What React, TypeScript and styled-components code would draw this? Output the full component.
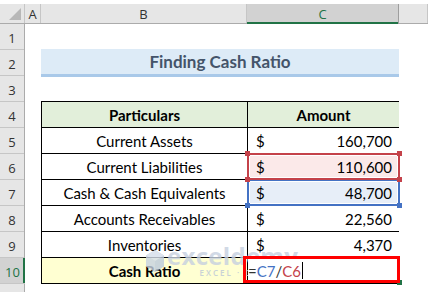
import styled, { createGlobalStyle, css } from 'styled-components'

const GlobalStyle = createGlobalStyle`
  html, body {
    margin: 0;
    padding: 0;
    background: #fff;
  }
  body {
    font-family: Lato, "Open Sans", "Liberation Sans", sans-serif;
    color: #000;
  }
`

type Tone = 'red' | 'blue'

interface IRow {
  label: string;
  amount: string;
  tone?: Tone;
}

const rows: IRow[] = [
  { label: 'Current Assets', amount: '160,700' },
  { label: 'Current Liabilities', amount: '110,600', tone: 'red' },
  { label: 'Cash & Cash Equivalents', amount: '48,700', tone: 'blue' },
  { label: 'Accounts Receivables', amount: '22,560' },
  { label: 'Inventories', amount: '4,370' },
]

// row 11 is only a sliver at the bottom, its number is out of view
const rowNumbers = [1, 2, 3, 4, 5, 6, 7, 8, 9, 10]

const toneColors = {
  red: { line: '#C4424A', fill: '#FBE9E9' },
  blue: { line: '#4472C4', fill: '#E7EEF8' },
}

const App = () => {
  return (
    <>
      <GlobalStyle />
      <Sheet>
        <HeaderRow>
          <Corner />
          <ColHead $w={16}>A</ColHead>
          <ColHead $w={206}>B</ColHead>
          <ColHead $w={152} $active>C</ColHead>
          <ColHead $grow />
        </HeaderRow>
        <Body>
          <RowHeads>
            {rowNumbers.map(n => (
              <RowHead key={n} $active={n === 10}>{n}</RowHead>
            ))}
            <RowHead />
          </RowHeads>
          <Grid>
            <Title>Finding Cash Ratio</Title>
            <Table>
              <HeadCell>Particulars</HeadCell>
              <HeadCell>Amount</HeadCell>
              {rows.map(r => (
                <Row key={r.label} label={r.label} amount={r.amount} tone={r.tone} />
              ))}
              <LabelCell $result>Cash Ratio</LabelCell>
              <EditCell>
                <span>=</span>
                <Ref $tone="blue">C7</Ref>
                <span>/</span>
                <Ref $tone="red">C6</Ref>
                <Caret />
                <FillHandle />
              </EditCell>
            </Table>
            <Watermark>
              <svg width="20" height="24" viewBox="0 0 20 24">
                <path d="M10 1 L19 6.5 L19 17.5 L10 23 L1 17.5 L1 6.5 Z" fill="#bccadc" />
                <path d="M10 1 L19 6.5 L10 12 L1 6.5 Z" fill="#d6deea" />
                <path d="M10 12 L10 23 L1 17.5 L1 6.5 Z" fill="#c8d3e2" />
              </svg>
              <MarkText>
                <MarkName>exceldemy</MarkName>
                <MarkTag>EXCEL · DATA · BI</MarkTag>
              </MarkText>
            </Watermark>
          </Grid>
        </Body>
      </Sheet>
    </>
  )
}

const Row = ({ label, amount, tone }: IRow) => (
  <>
    <LabelCell>{label}</LabelCell>
    <AmountCell $tone={tone}>
      <span>$</span>
      <span>{amount}</span>
      {tone && (
        <>
          <Handle $tone={tone} $x="left" $y="top" />
          <Handle $tone={tone} $x="right" $y="top" />
          <Handle $tone={tone} $x="left" $y="bottom" />
          <Handle $tone={tone} $x="right" $y="bottom" />
        </>
      )}
    </AmountCell>
  </>
)

const Sheet = styled.div`
  width: 428px;
  height: 292px;
  overflow: hidden;
  padding-top: 4px;
  box-sizing: border-box;
`

const HeaderRow = styled.div`
  display: flex;
  height: 19px;
  background: #e6e6e6;
  border-bottom: 1px solid #ababab;
`

const Corner = styled.div`
  width: 24px;
  border-right: 1px solid #c6c6c6;
  position: relative;
  &::after {
    content: '';
    position: absolute;
    right: 3px;
    bottom: 3px;
    border-left: 12px solid transparent;
    border-bottom: 12px solid #b7b7b7;
  }
`

const ColHead = styled.div<{ $w?: number; $grow?: boolean; $active?: boolean }>`
  width: ${p => (p.$w ? `${p.$w - 1}px` : 'auto')};
  flex: ${p => (p.$grow ? 1 : 'none')};
  border-right: 1px solid #c6c6c6;
  display: flex;
  align-items: center;
  justify-content: center;
  font-family: "Open Sans", "Liberation Sans", sans-serif;
  font-size: 13px;
  color: #333;
  ${p =>
    p.$active &&
    css`
      background: #d2d2d2;
      color: #217346;
      box-shadow: inset 0 -2px 0 #217346;
      margin-bottom: -1px;
      border-right-color: #9e9e9e;
    `}
`

const Body = styled.div`
  display: flex;
`

const RowHeads = styled.div`
  width: 24px;
  background: #e6e6e6;
  border-right: 1px solid #ababab;
  display: flex;
  flex-direction: column;
`

const RowHead = styled.div<{ $active?: boolean }>`
  height: 23px;
  padding-bottom: 2px;
  border-bottom: 1px solid #c6c6c6;
  display: flex;
  align-items: flex-end;
  justify-content: center;
  font-family: "Open Sans", "Liberation Sans", sans-serif;
  font-size: 13px;
  color: #333;
  ${p =>
    p.$active &&
    css`
      background: #d2d2d2;
      color: #217346;
      box-shadow: inset -2px 0 0 #217346;
      margin-right: -1px;
    `}
`

const Grid = styled.div`
  position: relative;
  flex: 1;
  display: grid;
  grid-template-columns: 16px 206px 152px 1fr;
  grid-template-rows: repeat(11, 26px);
`

const Title = styled.div`
  grid-column: 2 / 4;
  grid-row: 2;
  align-self: start;
  margin-top: -1px;
  height: 25px;
  background: #ddebf7;
  border-bottom: 3px solid #a9c9e9;
  display: flex;
  align-items: center;
  justify-content: center;
  font-size: 17px;
  font-weight: 700;
  color: #44546a;
`

const Table = styled.div`
  grid-column: 2 / 4;
  grid-row: 4 / 11;
  align-self: start;
  margin-top: -1px;
  display: grid;
  grid-template-columns: 205px 151px;
  grid-auto-rows: 25px;
  gap: 1px;
  padding: 1px;
  background: #000;
`

const cellBase = css`
  display: flex;
  align-items: center;
  font-size: 15px;
  background: #fff;
  position: relative;
`

const HeadCell = styled.div`
  ${cellBase};
  justify-content: center;
  background: #e2efda;
  font-weight: 700;
`

const LabelCell = styled.div<{ $result?: boolean }>`
  ${cellBase};
  justify-content: center;
  ${p =>
    p.$result &&
    css`
      background: #ffffd2;
      font-weight: 700;
    `}
`

const AmountCell = styled.div<{ $tone?: Tone }>`
  ${cellBase};
  justify-content: space-between;
  padding: 0 7px 0 8px;
  ${p =>
    p.$tone &&
    css`
      background: ${toneColors[p.$tone].fill};
      z-index: ${p.$tone === 'red' ? 2 : 1};
      &::after {
        content: '';
        position: absolute;
        inset: -1px;
        border: 2px solid ${toneColors[p.$tone].line};
        box-shadow: inset 0 0 0 1px #fff;
      }
    `}
`

const Handle = styled.span<{ $tone: Tone; $x: 'left' | 'right'; $y: 'top' | 'bottom' }>`
  position: absolute;
  width: 5px;
  height: 5px;
  background: ${p => toneColors[p.$tone].line};
  ${p => p.$x}: -3px;
  ${p => p.$y}: -3px;
  z-index: 3;
`

const EditCell = styled.div`
  ${cellBase};
  padding-left: 0;
  z-index: 6;
  color: #333;
  &::after {
    content: '';
    position: absolute;
    left: -5px;
    top: -2px;
    right: -1px;
    bottom: 0;
    border: 3px solid #ff0000;
  }
`

const Ref = styled.span<{ $tone: Tone }>`
  color: ${p => toneColors[p.$tone].line};
`

const Caret = styled.span`
  width: 1px;
  height: 17px;
  background: #000;
  margin-left: 1px;
`

const FillHandle = styled.span`
  position: absolute;
  right: -3px;
  bottom: -2px;
  width: 5px;
  height: 5px;
  background: #217346;
`

const Watermark = styled.div`
  position: absolute;
  left: 120px;
  top: 220px;
  display: flex;
  align-items: center;
  gap: 2px;
  opacity: 0.8;
  pointer-events: none;
  z-index: 5;
`

const MarkText = styled.div`
  display: flex;
  flex-direction: column;
  align-items: flex-end;
  line-height: 1;
`

const MarkName = styled.div`
  font-family: "Open Sans", "Liberation Sans", sans-serif;
  font-size: 24px;
  font-weight: 700;
  color: #c6d0e0;
  letter-spacing: 0.3px;
`

const MarkTag = styled.div`
  font-family: "Open Sans", "Liberation Sans", sans-serif;
  font-size: 8px;
  font-weight: 600;
  color: #bcc7d8;
  letter-spacing: 2px;
  margin-top: 1px;
`

export default App
